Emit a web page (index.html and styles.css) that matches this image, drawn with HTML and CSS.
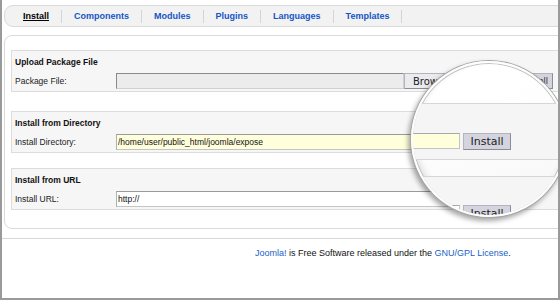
FILE: index.html
```html
<!DOCTYPE html>
<html>
<head>
<meta charset="utf-8">
<link rel="stylesheet" href="styles.css">
</head>
<body>
<div class="frame">
  <div class="page">
    <div class="tabs">
      <a class="tab active">Install</a>
      <a class="tab">Components</a>
      <a class="tab">Modules</a>
      <a class="tab">Plugins</a>
      <a class="tab">Languages</a>
      <a class="tab">Templates</a>
    </div>
    <div class="panel">
      <div class="section">
        <div class="title">Upload Package File</div>
        <div class="row">
          <span class="label">Package File:</span>
          <div class="field file"></div>
          <span class="btn browse">Browse...</span>
          <span class="btn upload">Upload File &amp; Install</span>
        </div>
      </div>
      <div class="section s2">
        <div class="title">Install from Directory</div>
        <div class="row">
          <span class="label">Install Directory:</span>
          <div class="field yellow">/home/user/public_html/joomla/expose</div>
          <span class="btn">Install</span>
        </div>
      </div>
      <div class="section s3">
        <div class="title">Install from URL</div>
        <div class="row">
          <span class="label">Install URL:</span>
          <div class="field">http://</div>
          <span class="btn">Install</span>
        </div>
      </div>
    </div>
    <div class="footer"><a class="link">Joomla!</a> is Free Software released under the <a class="link">GNU/GPL License</a>.</div>
  </div>
  <div class="lens">
    <div class="lens-line l1"></div>
    <div class="lens-band b1"></div>
    <div class="lens-line l2"></div>
    <div class="lens-line l3"></div>
    <div class="lens-band b2"></div>
    <div class="lens-field yellow f1"></div>
    <div class="lens-btn k1">Install</div>
    <div class="lens-field f2"></div>
    <div class="lens-btn k2">Install</div>
  </div>
</div>
</body>
</html>
```
FILE: styles.css
```css
html, body {
  margin: 0;
  padding: 0;
  background: #fff;
}
.frame {
  position: relative;
  width: 560px;
  height: 300px;
  box-sizing: border-box;
  border-left: 2px solid #9a9a9a;
  border-right: 2px solid #9a9a9a;
  border-bottom: 2px solid #9a9a9a;
  overflow: hidden;
  font-family: "Liberation Sans", Arial, sans-serif;
}
.page {
  width: 600px;
  padding-left: 2px;
}
.tabs {
  margin-top: 5px;
  height: 22px;
  box-sizing: border-box;
  border: 1px solid #dadada;
  border-radius: 9px 0 0 9px;
  background: #f2f2f2;
  display: flex;
  align-items: center;
  padding-left: 6px;
}
.tab {
  padding: 0 12px;
  border-right: 1px solid #d4d4d4;
  line-height: 13px;
  font-size: 9px;
  font-weight: bold;
  color: #1556c6;
}
.tab.active {
  color: #000;
  text-decoration: underline;
}
.panel {
  margin-top: 8px;
  border: 1px solid #dadada;
  border-radius: 8px;
  padding: 14px 0 18px 6px;
}
.section {
  background: #f6f6f6;
  border: 1px solid #dcdcdc;
  padding: 4px 3px 2px;
}
.s2 { margin-top: 19px; }
.s3 { margin-top: 15px; }
.title {
  line-height: 14px;
  font-size: 8.5px;
  font-weight: bold;
  color: #111;
}
.row {
  margin-top: 4px;
  height: 16px;
  display: flex;
  align-items: center;
}
.label {
  width: 101px;
  font-size: 8.5px;
  color: #222;
}
.field {
  width: 344px;
  height: 16px;
  box-sizing: border-box;
  border: 1px solid #c4c4c4;
  border-top-color: #9a9a9a;
  border-left-color: #b0b0b0;
  background: #fff;
  font-size: 8.5px;
  line-height: 14px;
  padding: 0 1px;
  color: #111;
}
.field.file {
  width: 288px;
  background: #ececec;
  border-color: #8a8a8a #d0d0d0 #d0d0d0 #8a8a8a;
}
.field.yellow {
  background: #ffffdc;
}
.btn {
  margin-left: 3px;
  width: 48px;
  height: 17px;
  box-sizing: border-box;
  background: #d4d4de;
  border: 1px solid #b4b4be;
  border-right-color: #8c8c96;
  border-bottom-color: #8c8c96;
  font-family: "DejaVu Sans", sans-serif;
  font-size: 10px;
  line-height: 15px;
  text-align: center;
  color: #222;
}
.btn.browse {
  margin-left: 0;
  width: 52px;
  height: 16px;
  background: #ebebef;
  text-align: left;
  padding-left: 8px;
}
.btn.upload {
  width: 94px;
  height: 16px;
  white-space: nowrap;
  overflow: hidden;
  font-size: 8px;
  text-align: right;
  padding-right: 4px;
}
.footer {
  margin-top: 9px;
  margin-left: -2px;
  border-top: 1px solid #d8d8d8;
  padding: 8px 0 0 253px;
  font-size: 9px;
  line-height: 12px;
  color: #111;
}
.link {
  color: #1a5fc8;
}
.lens {
  position: absolute;
  left: 409px;
  top: 61px;
  width: 156px;
  height: 156px;
  box-sizing: border-box;
  border-radius: 50%;
  border: 2px solid #fdfdfd;
  background: linear-gradient(160deg, #ffffff 30%, #f6f6f6 100%);
  box-shadow: 0 0 0 1px #a6a6a6, -2px 3px 5px 1px rgba(0, 0, 0, 0.35), inset 0 0 0 1px #c2c2c2, inset 2px -3px 6px rgba(0, 0, 0, 0.12);
  overflow: hidden;
}
.lens-line {
  position: absolute;
  left: 0;
  width: 160px;
  height: 1px;
  background: #d6d6d6;
}
.l1 { top: 40px; }
.l2 { top: 96px; }
.l3 { top: 113px; }
.lens-band {
  position: absolute;
  left: 0;
  width: 160px;
  background: #f5f5f5;
}
.b1 { top: 41px; height: 55px; }
.b2 { top: 114px; height: 50px; }
.lens-field {
  position: absolute;
  left: -10px;
  width: 57px;
  height: 16px;
  box-sizing: border-box;
  border: 1px solid #c4c4c4;
  border-top-color: #a8a8a8;
  background: #fff;
}
.lens-field.yellow { background: #ffffdc; }
.f1 { top: 70px; }
.f2 { top: 142px; }
.lens-btn {
  position: absolute;
  left: 50px;
  width: 48px;
  height: 17px;
  box-sizing: border-box;
  background: #d4d4de;
  border: 1px solid #b4b4be;
  border-right-color: #8c8c96;
  border-bottom-color: #8c8c96;
  font-family: "DejaVu Sans", sans-serif;
  font-size: 11px;
  line-height: 15px;
  text-align: center;
  color: #222;
}
.k1 { top: 70px; }
.k2 { top: 142px; }
```
